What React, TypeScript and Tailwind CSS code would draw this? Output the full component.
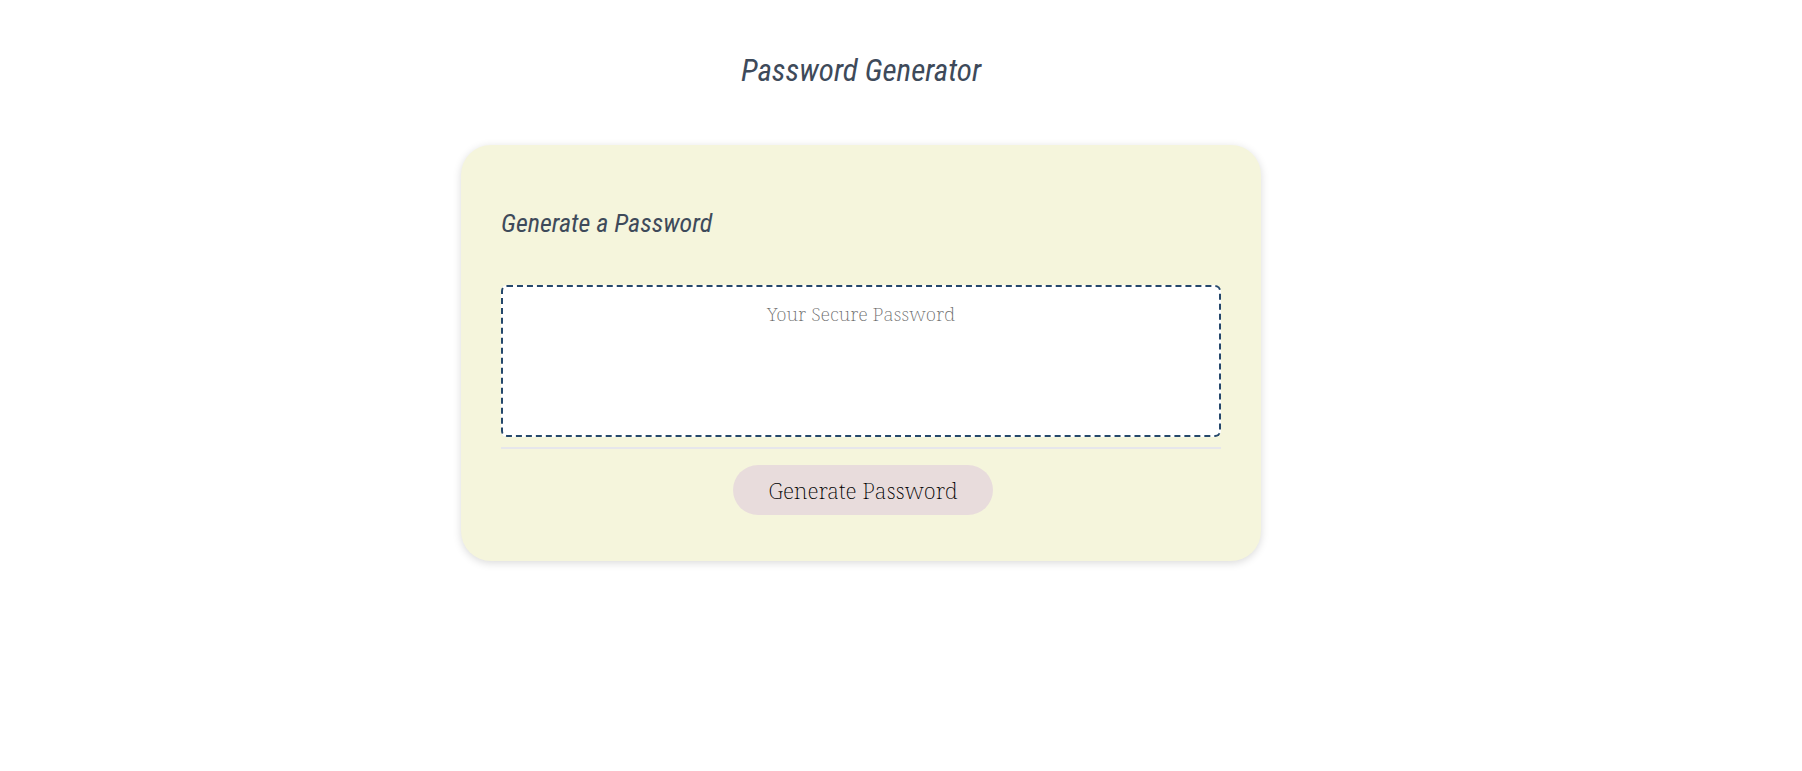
import { useState } from "react";

const CHARACTERS =
  "ABCDEFGHIJKLMNOPQRSTUVWXYZabcdefghijklmnopqrstuvwxyz0123456789!@#$%^&*";

function createPassword(length: number): string {
  const values = crypto.getRandomValues(new Uint32Array(length));
  return Array.from(values, (value) => CHARACTERS[value % CHARACTERS.length]).join("");
}

export default function App() {
  const [password, setPassword] = useState("");

  return (
    <div className="min-h-screen bg-white pt-10 pr-20 pb-10">
      <header className="text-center">
        <h1 className="font-['Roboto_Condensed','Roboto',sans-serif] text-[31px] leading-[62px] font-normal text-[#3e4a5a] italic">
          Password Generator
        </h1>
      </header>
      <main className="mx-auto mt-[43px] w-full max-w-[800px] rounded-[30px] bg-[#f5f5dc] px-10 pt-[38px] pb-[46px] shadow-[0_2px_8px_rgba(0,0,0,0.15)]">
        <h2 className="font-['Roboto_Condensed','Roboto',sans-serif] text-[26px] leading-[80px] font-normal text-[#3e4a5a] italic">
          Generate a Password
        </h2>
        <textarea
          readOnly
          aria-label="Your Secure Password"
          placeholder="Your Secure Password"
          value={password}
          className="mt-[22px] block h-[152px] w-full resize-none rounded-md border-2 border-dashed border-[#24476b] bg-white px-4 py-[11px] text-center font-['Noto_Serif_ExtraLight','Noto_Serif',serif] text-[19px] leading-8 font-extralight text-[#333333] outline-none placeholder:text-[#6c6c6c]"
        />
        <div className="mt-[10px] flex justify-center border-t-2 border-[#e6e6eb] pt-4 pl-1">
          <button
            type="button"
            onClick={() => setPassword(createPassword(16))}
            className="h-[50px] w-[260px] cursor-pointer rounded-full bg-[#e8dcdc] font-['Noto_Serif_ExtraLight','Noto_Serif',serif] text-[22px] leading-8 font-extralight text-black"
          >
            Generate Password
          </button>
        </div>
      </main>
    </div>
  );
}
